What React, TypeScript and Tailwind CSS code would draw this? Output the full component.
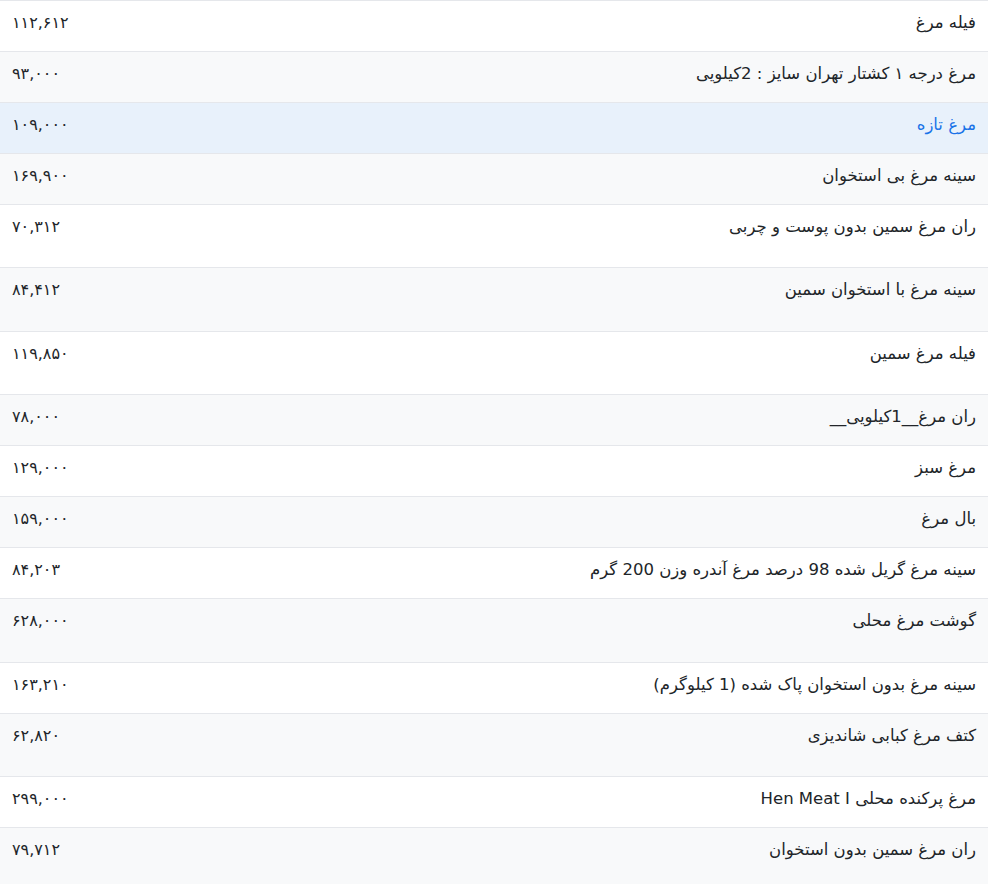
const rows: [string, string, string][] = [
  ["فیله مرغ", "۱۱۲,۶۱۲", "h-[51px]"],
  ["مرغ درجه ۱ کشتار تهران سایز : 2کیلویی", "۹۳,۰۰۰", "h-[51px]"],
  ["مرغ تازه", "۱۰۹,۰۰۰", "h-[51px]"],
  ["سینه مرغ بی استخوان", "۱۶۹,۹۰۰", "h-[51px]"],
  ["ران مرغ سمین بدون پوست و چربی", "۷۰,۳۱۲", "h-[63px]"],
  ["سینه مرغ با استخوان سمین", "۸۴,۴۱۲", "h-[64px]"],
  ["فیله مرغ سمین", "۱۱۹,۸۵۰", "h-[63px]"],
  ["ران مرغ__1کیلویی__", "۷۸,۰۰۰", "h-[51px]"],
  ["مرغ سبز", "۱۲۹,۰۰۰", "h-[51px]"],
  ["بال مرغ", "۱۵۹,۰۰۰", "h-[51px]"],
  ["سینه مرغ گریل شده 98 درصد مرغ آندره وزن 200 گرم", "۸۴,۲۰۳", "h-[51px]"],
  ["گوشت مرغ محلی", "۶۲۸,۰۰۰", "h-[64px]"],
  ["سینه مرغ بدون استخوان پاک شده (1 کیلوگرم)", "۱۶۳,۲۱۰", "h-[51px]"],
  ["کتف مرغ کبابی شاندیزی", "۶۲,۸۲۰", "h-[63px]"],
  ["مرغ پرکنده محلی Hen Meat I", "۲۹۹,۰۰۰", "h-[51px]"],
  ["ران مرغ سمین بدون استخوان", "۷۹,۷۱۲", "h-[57px]"],
];

export default function App() {
  return (
    <div dir="rtl" className="w-[988px] h-[884px] overflow-hidden bg-white text-[16.5px] leading-[26px] text-[#212529]" style={{ fontFamily: '"DejaVu Sans", "Noto Sans", sans-serif' }}>
      {rows.map(([name, price, h], i) => {
        const hl = i === 2;
        const bg = hl ? "bg-[#e8f1fb]" : i % 2 === 0 ? "bg-white" : "bg-[#f8f9fa]";
        return (
          <div key={i} className={`flex justify-between items-start border-t border-[#e5e7eb] px-3 pt-[9px] ${h} ${bg}`}>
            <span className={hl ? "text-[#1a73e8]" : ""}>{name}</span>
            <span className="text-[16px]">{price}</span>
          </div>
        );
      })}
    </div>
  );
}
